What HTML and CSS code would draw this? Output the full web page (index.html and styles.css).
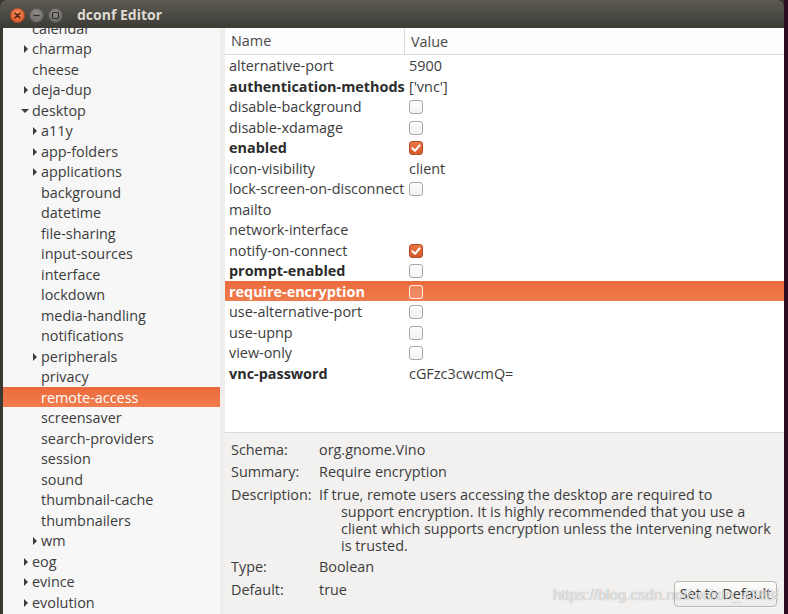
FILE: index.html
```html
<!DOCTYPE html>
<html lang="en">
<head>
<meta charset="utf-8">
<title>dconf Editor</title>
<link rel="stylesheet" href="styles.css">
</head>
<body>
<div class="window">
  <header class="titlebar">
    <div class="wbtns">
      <span class="wbtn close"><svg width="15" height="15" viewBox="0 0 15 15"><path d="M5.2 5.2 L9.8 9.8 M9.8 5.2 L5.2 9.8" stroke="#3b1a0c" stroke-width="1.4" stroke-linecap="round"/></svg></span>
      <span class="wbtn"><svg width="15" height="15" viewBox="0 0 15 15"><path d="M4.3 7.5 H10.7" stroke="#2e2d29" stroke-width="1.3"/></svg></span>
      <span class="wbtn"><svg width="15" height="15" viewBox="0 0 15 15"><rect x="4.5" y="4.5" width="6" height="6" rx="1" fill="none" stroke="#2e2d29" stroke-width="1.1"/></svg></span>
    </div>
    <span class="title">dconf Editor</span>
  </header>
  <div class="main">
    <nav class="tree">
      <div class="tree-inner">
        <div class="trow l1"><span class="exp"></span><span>calendar</span></div>
        <div class="trow l1"><span class="exp right"></span><span>charmap</span></div>
        <div class="trow l1"><span class="exp"></span><span>cheese</span></div>
        <div class="trow l1"><span class="exp right"></span><span>deja-dup</span></div>
        <div class="trow l1"><span class="exp down"></span><span>desktop</span></div>
        <div class="trow l2"><span class="exp right"></span><span>a11y</span></div>
        <div class="trow l2"><span class="exp right"></span><span>app-folders</span></div>
        <div class="trow l2"><span class="exp right"></span><span>applications</span></div>
        <div class="trow l2"><span class="exp"></span><span>background</span></div>
        <div class="trow l2"><span class="exp"></span><span>datetime</span></div>
        <div class="trow l2"><span class="exp"></span><span>file-sharing</span></div>
        <div class="trow l2"><span class="exp"></span><span>input-sources</span></div>
        <div class="trow l2"><span class="exp"></span><span>interface</span></div>
        <div class="trow l2"><span class="exp"></span><span>lockdown</span></div>
        <div class="trow l2"><span class="exp"></span><span>media-handling</span></div>
        <div class="trow l2"><span class="exp"></span><span>notifications</span></div>
        <div class="trow l2"><span class="exp right"></span><span>peripherals</span></div>
        <div class="trow l2"><span class="exp"></span><span>privacy</span></div>
        <div class="trow l2 sel"><span class="exp"></span><span>remote-access</span></div>
        <div class="trow l2"><span class="exp"></span><span>screensaver</span></div>
        <div class="trow l2"><span class="exp"></span><span>search-providers</span></div>
        <div class="trow l2"><span class="exp"></span><span>session</span></div>
        <div class="trow l2"><span class="exp"></span><span>sound</span></div>
        <div class="trow l2"><span class="exp"></span><span>thumbnail-cache</span></div>
        <div class="trow l2"><span class="exp"></span><span>thumbnailers</span></div>
        <div class="trow l2"><span class="exp right"></span><span>wm</span></div>
        <div class="trow l1"><span class="exp right"></span><span>eog</span></div>
        <div class="trow l1"><span class="exp right"></span><span>evince</span></div>
        <div class="trow l1"><span class="exp right"></span><span>evolution</span></div>
      </div>
    </nav>
    <div class="pane-sep"></div>
    <section class="content">
      <div class="list">
        <div class="lhead">
          <div class="cname">Name</div>
          <div class="cval">Value</div>
        </div>
        <div class="lrow"><div class="cname">alternative-port</div><div class="cval">5900</div></div>
        <div class="lrow bold"><div class="cname">authentication-methods</div><div class="cval">['vnc']</div></div>
        <div class="lrow"><div class="cname">disable-background</div><div class="cval"><span class="chk"></span></div></div>
        <div class="lrow"><div class="cname">disable-xdamage</div><div class="cval"><span class="chk"></span></div></div>
        <div class="lrow bold"><div class="cname">enabled</div><div class="cval"><span class="chk on"><svg width="14" height="14" viewBox="0 0 14 14"><path d="M3.4 7.3 L6 9.8 L10.6 4.4" fill="none" stroke="#fff" stroke-width="2" stroke-linecap="round" stroke-linejoin="round"/></svg></span></div></div>
        <div class="lrow"><div class="cname">icon-visibility</div><div class="cval">client</div></div>
        <div class="lrow"><div class="cname">lock-screen-on-disconnect</div><div class="cval"><span class="chk"></span></div></div>
        <div class="lrow"><div class="cname">mailto</div><div class="cval"></div></div>
        <div class="lrow"><div class="cname">network-interface</div><div class="cval"></div></div>
        <div class="lrow"><div class="cname">notify-on-connect</div><div class="cval"><span class="chk on"><svg width="14" height="14" viewBox="0 0 14 14"><path d="M3.4 7.3 L6 9.8 L10.6 4.4" fill="none" stroke="#fff" stroke-width="2" stroke-linecap="round" stroke-linejoin="round"/></svg></span></div></div>
        <div class="lrow bold"><div class="cname">prompt-enabled</div><div class="cval"><span class="chk"></span></div></div>
        <div class="lrow bold sel"><div class="cname">require-encryption</div><div class="cval"><span class="chk"></span></div></div>
        <div class="lrow"><div class="cname">use-alternative-port</div><div class="cval"><span class="chk"></span></div></div>
        <div class="lrow"><div class="cname">use-upnp</div><div class="cval"><span class="chk"></span></div></div>
        <div class="lrow"><div class="cname">view-only</div><div class="cval"><span class="chk"></span></div></div>
        <div class="lrow bold"><div class="cname">vnc-password</div><div class="cval">cGFzc3cwcmQ=</div></div>
      </div>
      <div class="details">
        <div class="drow"><span class="dlabel">Schema:</span><span class="dval">org.gnome.Vino</span></div>
        <div class="drow"><span class="dlabel">Summary:</span><span class="dval">Require encryption</span></div>
        <div class="drow"><span class="dlabel">Description:</span>
          <span class="dval desc">
            <span class="dline first">If true, remote users accessing the desktop are required to</span>
            <span class="dline">support encryption. It is highly recommended that you use a</span>
            <span class="dline">client which supports encryption unless the intervening network</span>
            <span class="dline">is trusted.</span>
          </span>
        </div>
        <div class="drow type"><span class="dlabel">Type:</span><span class="dval">Boolean</span></div>
        <div class="drow last"><span class="dlabel">Default:</span><span class="dval">true</span><button class="btn" type="button">Set to Default</button></div>
      </div>
      <div class="watermark">https://blog.csdn.net/weixin_43888</div>
    </section>
  </div>
</div>
</body>
</html>
```
FILE: styles.css
```css
* { box-sizing: border-box; }

html, body {
  margin: 0;
  padding: 0;
}

body {
  width: 788px;
  height: 614px;
  overflow: hidden;
  background: #2b0d22;
  font-family: "Open Sans", "Noto Sans", sans-serif;
  font-size: 14.4px;
  color: #3c3c3c;
}

.window {
  width: 784px;
  height: 614px;
  display: flex;
  flex-direction: column;
  background: #3a3933;
}

/* title bar */
.titlebar {
  height: 28px;
  flex: none;
  display: flex;
  align-items: center;
  border-radius: 7px 7px 0 0;
  background: linear-gradient(#5c5a53, #45443e 70%, #3c3b36);
}

.wbtns {
  display: flex;
  gap: 4px;
  padding-left: 10px;
  padding-top: 2px;
}

.wbtn {
  width: 15px;
  height: 15px;
  border-radius: 50%;
  background: radial-gradient(circle at 50% 35%, #8f8d86, #6f6d67 70%, #5e5c57);
  box-shadow: inset 0 0 0 1px rgba(0,0,0,0.25);
  display: flex;
}

.wbtn.close {
  background: radial-gradient(circle at 50% 35%, #f58a5c, #e2602f 65%, #c54d22);
}

.title {
  margin-left: 14px;
  padding-top: 1px;
  font-weight: 700;
  font-size: 14px;
  color: #dfdbd2;
}

/* main area */
.main {
  flex: 1;
  display: flex;
  min-height: 0;
  padding-left: 3px;
}

.tree {
  width: 217px;
  flex: none;
  background: #f7f7f7;
  overflow: hidden;
}

.tree-inner {
  margin-top: -10.5px;
}

.trow {
  height: 20.5px;
  line-height: 18.5px;
  padding-top: 2px;
  display: flex;
  align-items: center;
  white-space: nowrap;
}

.trow.l1 { padding-left: 20px; }
.trow.l2 { padding-left: 29px; }

.exp {
  width: 9px;
  height: 18.5px;
  flex: none;
  position: relative;
}

.exp.right::before {
  content: "";
  position: absolute;
  left: 1px;
  top: 5px;
  border-left: 4px solid #3c3c3c;
  border-top: 4px solid transparent;
  border-bottom: 4px solid transparent;
}

.exp.down::before {
  content: "";
  position: absolute;
  left: -2px;
  top: 7px;
  border-top: 4.5px solid #3c3c3c;
  border-left: 4px solid transparent;
  border-right: 4px solid transparent;
}

.trow.sel {
  background: linear-gradient(#ea6b3c, #f17c4d);
  color: #ffffff;
}

.pane-sep {
  width: 5px;
  flex: none;
  background: #efeeec;
}

/* right content */
.content {
  flex: 1;
  display: flex;
  flex-direction: column;
  min-width: 0;
  position: relative;
  background: #f2f1f0;
}

.list {
  height: 405px;
  flex: none;
  background: #ffffff;
  border-bottom: 1px solid #dad9d7;
}

.lhead {
  height: 27px;
  display: flex;
  align-items: center;
  border-bottom: 1px solid #dedede;
  background: #fdfdfd;
  color: #4a4a4a;
}

.lhead .cname {
  width: 180px;
  height: 26px;
  line-height: 26px;
  padding-left: 6px;
  border-right: 1px solid #dcdcdc;
}

.lhead .cval {
  padding-left: 6px;
}

.lrow {
  height: 20.5px;
  line-height: 18.5px;
  padding-top: 2px;
  display: flex;
  align-items: center;
  white-space: nowrap;
  color: #3c3c3c;
}

.lrow .cname {
  width: 180px;
  flex: none;
  padding-left: 4px;
}

.lrow .cval {
  padding-left: 4px;
  display: flex;
  align-items: center;
}

.lrow.bold .cname {
  font-weight: 700;
  color: #2c2c2c;
}

.lrow.sel {
  background: linear-gradient(#ea6b3c, #f17c4d);
  color: #ffffff;
}

.lrow.sel .cname { color: #ffffff; }

.chk {
  width: 14px;
  height: 14px;
  border: 1px solid #a6a6a4;
  border-radius: 3px;
  background: linear-gradient(#ffffff, #f1f1f0);
  display: flex;
  align-items: center;
  justify-content: center;
}

.chk.on {
  border-color: #b24f24;
  background: linear-gradient(#ec7444, #d45a2a);
}

.chk svg { flex: none; }

.lrow.sel .chk {
  border-color: rgba(255,255,255,0.85);
  background: rgba(255,255,255,0.15);
}

/* details */
.details {
  flex: 1;
  padding: 7.5px 7px 0 6px;
  display: flex;
  flex-direction: column;
  gap: 5.5px;
  color: #3c3c3c;
  line-height: 17px;
}

.drow {
  display: flex;
  align-items: flex-start;
}

.drow.type {
  margin-top: -1px;
}

.dlabel {
  width: 88px;
  flex: none;
}

.desc {
  display: flex;
  flex-direction: column;
  padding-left: 22px;
}

.dline { white-space: nowrap; }
.dline.first { margin-left: -22px; }

.btn {
  margin-left: auto;
  height: 26px;
  width: 103px;
  padding: 0;
  font-family: inherit;
  font-size: 14.4px;
  color: #3c3c3c;
  border: 1px solid #b8b7b4;
  border-radius: 4px;
  background: linear-gradient(#fcfcfb, #eeedeb);
  box-shadow: 0 1px 0 rgba(255,255,255,0.6);
}

.watermark {
  position: absolute;
  left: 328px;
  top: 558px;
  width: 226px;
  overflow: hidden;
  white-space: nowrap;
  font-family: "Liberation Sans", Arial, sans-serif;
  font-size: 15px;
  line-height: 18px;
  color: rgba(255,255,255,0.75);
  text-shadow: 0 0 1px rgba(0,0,0,0.45);
  pointer-events: none;
}
```
